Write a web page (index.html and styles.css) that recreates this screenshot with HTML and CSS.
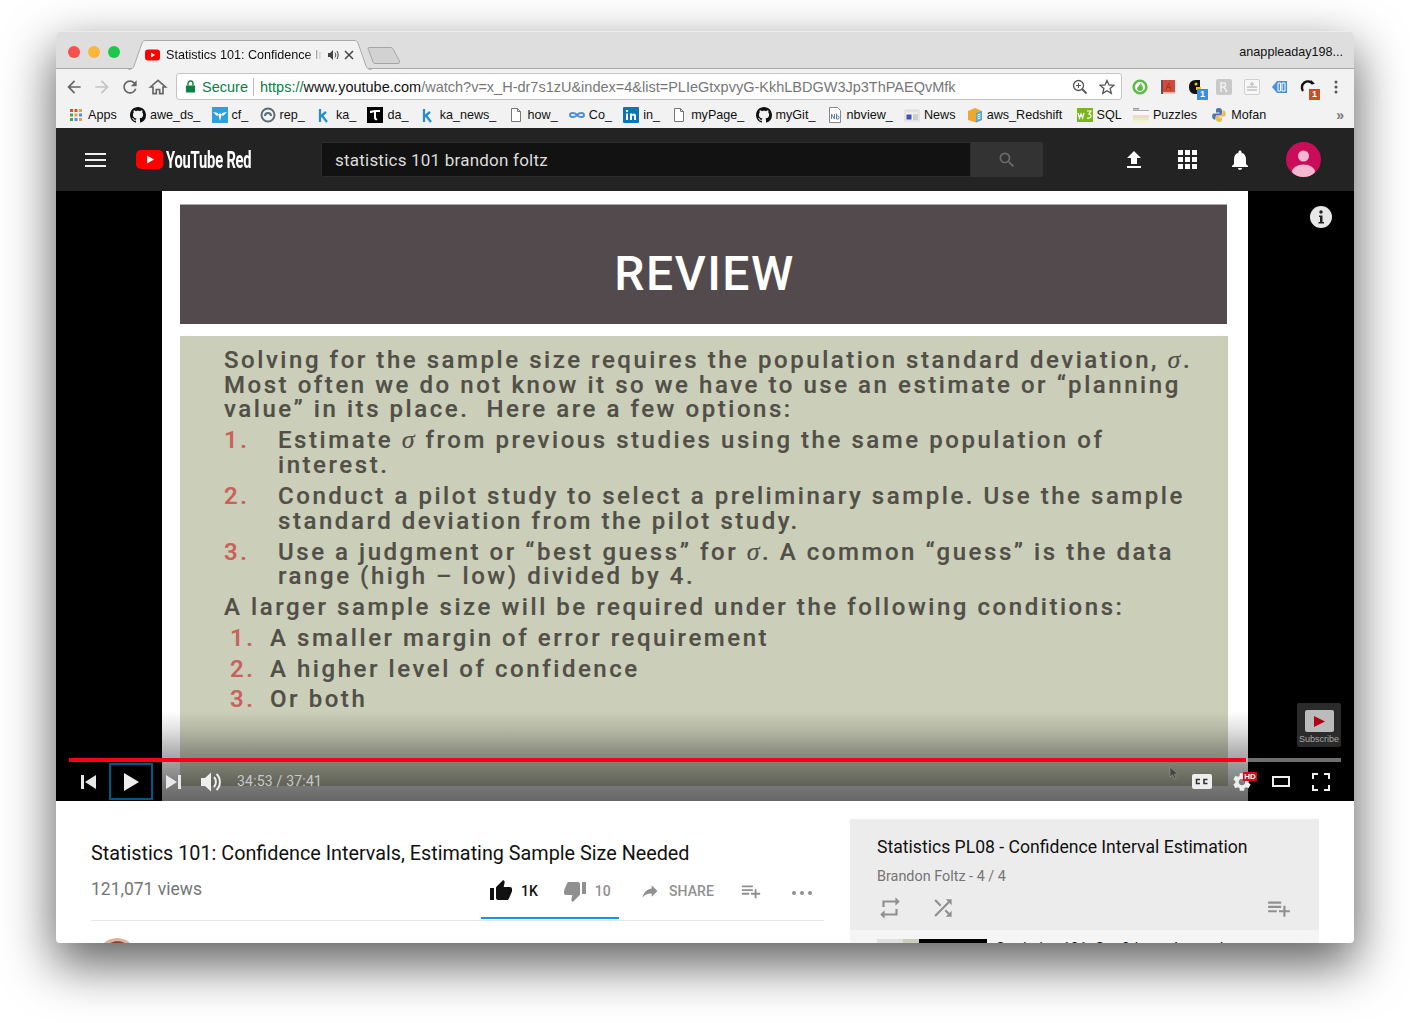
FILE: index.html
```html
<!DOCTYPE html>
<html lang="en">
<head>
<meta charset="utf-8">
<title>Statistics 101: Confidence Intervals</title>
<link rel="stylesheet" href="styles.css">
</head>
<body>
<svg class="defs" width="0" height="0">
  <symbol id="gh" viewBox="0 0 16 16"><path d="M8 0C3.58 0 0 3.58 0 8c0 3.54 2.29 6.53 5.47 7.59.4.07.55-.17.55-.38 0-.19-.01-.82-.01-1.49-2.01.37-2.53-.49-2.69-.94-.09-.23-.48-.94-.82-1.13-.28-.15-.68-.52-.01-.53.63-.01 1.08.58 1.23.82.72 1.21 1.87.87 2.33.66.07-.52.28-.87.51-1.07-1.78-.2-3.64-.89-3.64-3.95 0-.87.31-1.59.82-2.15-.08-.2-.36-1.02.08-2.12 0 0 .67-.21 2.2.82.64-.18 1.32-.27 2-.27.68 0 1.36.09 2 .27 1.53-1.04 2.2-.82 2.2-.82.44 1.1.16 1.92.08 2.12.51.56.82 1.27.82 2.15 0 3.07-1.87 3.75-3.65 3.95.29.25.54.73.54 1.48 0 1.07-.01 1.93-.01 2.2 0 .21.15.46.55.38A8.013 8.013 0 0016 8c0-4.42-3.58-8-8-8z" fill="#111"/></symbol>
  <symbol id="doc" viewBox="0 0 16 16"><path d="M3.5 1.5h6l3 3v10h-9z M9.5 1.5v3h3" fill="#fff" stroke="#777" stroke-width="1"/></symbol>
  <symbol id="k" viewBox="0 0 16 16"><path d="M4 2v13M4 10l6-5M6 8.500l5 6.500" fill="none" stroke="#2a8fc4" stroke-width="2.300"/></symbol>
  <symbol id="plus" viewBox="0 0 24 24"><path d="M14 10H2v2h12v-2zm0-4H2v2h12V6zm4 8v-4h-2v4h-4v2h4v4h2v-4h4v-2h-4zM2 16h8v-2H2v2z"/></symbol>
</svg>
<div class="window">

  <header class="titlebar">
    <div class="lights"><span class="light red"></span><span class="light amber"></span><span class="light green"></span></div>
    <div class="tab">
      <svg class="tab-shape" width="244" height="30" viewBox="0 0 244 30"><path d="M0.500 29.500C4 29.500 5 28 6 26L14 3C15 1 16 .500 18 .500H226C228 .500 229 1 230 3L238 26C239 28 240 29.500 243.500 29.500" fill="#f2f2f2" stroke="#a9a9a9"/></svg>
      <svg class="fav" width="16" height="12" viewBox="0 0 16 12"><rect width="15" height="11" y=".5" rx="3" fill="#f00"/><path d="M6 3.500v5l4-2.500z" fill="#fff"/></svg>
      <span class="tab-title">Statistics 101: Confidence Intervals</span>
      <svg class="tab-audio" width="11" height="10" viewBox="0 0 11 10"><path d="M0 3h2l3-3v10L2 7H0z" fill="#444"/><path d="M7 2.500c1 1.500 1 3.500 0 5M9 1c1.500 2.500 1.500 5.500 0 8" stroke="#444" fill="none"/></svg>
      <svg class="tab-close" width="10" height="10" viewBox="0 0 10 10"><path d="M1 1l8 8M9 1l-8 8" stroke="#444" stroke-width="1.500"/></svg>
    </div>
    <svg class="newtab" width="34" height="17" viewBox="0 0 34 17"><path d="M1 1.500C1 1 1.500 .500 2 .500H24C25 .500 25.500 1 26 2L32.500 14C33 15.500 32.500 16.500 31 16.500H8C7 16.500 6.500 16 6 15z" fill="#d2d2d2" stroke="#a5a5a5"/></svg>
    <span class="profile">anappleaday198...</span>
  </header>

  <nav class="toolbar">
    <svg class="nav-ic" width="20" height="20" viewBox="0 0 24 24"><path fill="#666" d="M20 11H7.830l5.590-5.590L12 4l-8 8 8 8 1.410-1.410L7.830 13H20v-2z"/></svg>
    <svg class="nav-ic" width="20" height="20" viewBox="0 0 24 24"><path fill="#c4c4c4" d="M4 11h12.170l-5.590-5.590L12 4l8 8-8 8-1.410-1.410L16.170 13H4v-2z"/></svg>
    <svg class="nav-ic" width="20" height="20" viewBox="0 0 24 24"><path fill="#666" d="M17.650 6.350A7.958 7.958 0 0012 4c-4.420 0-7.990 3.580-7.990 8s3.570 8 7.990 8c3.730 0 6.840-2.550 7.730-6h-2.080A5.990 5.990 0 0112 18c-3.310 0-6-2.690-6-6s2.690-6 6-6c1.660 0 3.140.69 4.220 1.780L13 11h7V4l-2.350 2.350z"/></svg>
    <svg class="nav-ic" width="20" height="20" viewBox="0 0 24 24"><path fill="none" stroke="#666" stroke-width="2" d="M3 12l9-8 9 8h-3v8h-4v-5h-4v5H6v-8z"/></svg>
    <div class="omnibox">
      <svg width="11" height="13" viewBox="0 0 11 13"><path d="M1 5.500h9V12.500H1z" fill="#0b8043"/><path d="M3 5.500V3.500a2.500 2.500 0 015 0v2" fill="none" stroke="#0b8043" stroke-width="1.400"/></svg>
      <span class="secure">Secure</span>
      <span class="omni-sep"></span>
      <span class="url"><span class="u-g">https://</span><span class="u-b">www.youtube.com</span><span class="u-l">/watch?v=x_H-dr7s1zU&amp;index=4&amp;list=PLIeGtxpvyG-KkhLBDGW3Jp3ThPAEQvMfk</span></span>
      <svg class="omni-zoom" width="16" height="16" viewBox="0 0 16 16"><circle cx="6.500" cy="6.500" r="5" fill="none" stroke="#555" stroke-width="1.300"/><path d="M10 10l4.500 4.500" stroke="#555" stroke-width="1.800"/><path d="M4 6.500h5M6.500 4v5" stroke="#555"/></svg>
      <svg width="16" height="16" viewBox="0 0 16 16"><path d="M8 1.500l2 4.500 4.800.4-3.700 3.100 1.200 4.800L8 11.700 3.700 14.300l1.200-4.800L1.200 6.400 6 6z" fill="none" stroke="#555" stroke-width="1.300"/></svg>
    </div>
    <div class="exts">
      <svg width="16" height="16" viewBox="0 0 16 16"><circle cx="8" cy="8" r="6.300" fill="#fff" stroke="#5dbb46" stroke-width="2.600"/><path d="M5 9a3 3 0 006 0c0-2-1.500-2.500-2-5-1 1-1 2-2 2.500z" fill="#5dbb46"/></svg>
      <svg width="16" height="16" viewBox="0 0 16 16"><path d="M2 1h13v12.500H2z" fill="#d44a3a"/><path d="M1 1h2v14H1z" fill="#555"/><path d="M3 13.500h12v1.500H3z" fill="#e9c9c0"/><path d="M6 11l2.500-7 2.500 7M7 8.500h3" fill="none" stroke="#a82f25"/></svg>
      <span class="ext-b"><svg width="16" height="16" viewBox="0 0 16 16"><path d="M8 1C3 1 1 4 1 8s2 7 6 7h5V1z" fill="#111"/><circle cx="8" cy="5" r="1.500" fill="#f1c40f"/><path d="M8 8h5v3H8z" fill="#f1c40f"/></svg><span class="badge blue">1</span></span>
      <svg width="16" height="16" viewBox="0 0 16 16"><rect width="16" height="16" rx="2" fill="#c9c9c9"/><path d="M5 3v10M5 4h3c2 0 2 4 0 4H5M8 8l3 5" stroke="#f1f1f1" stroke-width="1.500" fill="none"/></svg>
      <svg width="16" height="16" viewBox="0 0 16 16"><rect x=".5" y=".5" width="15" height="15" rx="1.500" fill="#f7f7f7" stroke="#d0d0d0"/><path d="M3 8h10M3 11h10M8 3v4M6 5h4" stroke="#c4c4c4" stroke-width="1.300"/></svg>
      <svg width="16" height="16" viewBox="0 0 16 16"><path d="M5 2h10v12H5L0 8z" fill="#4a90e2"/><path d="M6 4h2.500v8H6zM10 4h3v8h-3z" fill="none" stroke="#fff"/></svg>
      <span class="ext-b"><svg width="16" height="16" viewBox="0 0 16 16"><path d="M13 5A6 6 0 103 12" fill="none" stroke="#111" stroke-width="2.400"/><path d="M11 1v4h4z" fill="#111"/></svg><span class="badge rust">1</span></span>
      <svg class="dots" width="4" height="14" viewBox="0 0 4 14"><circle cx="2" cy="2" r="1.500" fill="#555"/><circle cx="2" cy="7" r="1.500" fill="#555"/><circle cx="2" cy="12" r="1.500" fill="#555"/></svg>
    </div>
  </nav>

  <div class="bookmarks">
    <span class="bm bm-first"><svg class="bm-apps" width="14" height="14" viewBox="0 0 14 14"><path d="M1 1h3v3H1z" fill="#e04a3a"/><path d="M5.500 1h3v3h-3z" fill="#e04a3a"/><path d="M10 1h3v3h-3z" fill="#e8a13a"/><path d="M1 5.500h3v3H1z" fill="#3aa757"/><path d="M5.500 5.500h3v3h-3z" fill="#e8a13a"/><path d="M10 5.500h3v3h-3z" fill="#4a8fe7"/><path d="M1 10h3v3H1z" fill="#3aa757"/><path d="M5.500 10h3v3h-3z" fill="#4a8fe7"/><path d="M10 10h3v3h-3z" fill="#e8a13a"/></svg>Apps</span>
    <span class="bm"><svg width="16" height="16"><use href="#gh"/></svg>awe_ds_</span>
    <span class="bm"><svg width="16" height="16" viewBox="0 0 16 16"><rect width="16" height="16" fill="#2f9fdf"/><path d="M1 5l5 1 2 8 2-8 5-1-4 4-3-3-3 3z" fill="#fff"/></svg>cf_</span>
    <span class="bm"><svg width="16" height="16" viewBox="0 0 16 16"><circle cx="8" cy="8" r="6.500" fill="none" stroke="#5b6b78" stroke-width="2"/><path d="M5 9a3 3 0 116 0" fill="none" stroke="#5b6b78" stroke-width="2"/></svg>rep_</span>
    <span class="bm"><svg width="16" height="16"><use href="#k"/></svg>ka_</span>
    <span class="bm"><svg width="16" height="16" viewBox="0 0 16 16"><rect width="16" height="16" fill="#000"/><path d="M3 5c2 0 3-1 5-1h5M8 4v7c0 1 1 1.500 2 1" fill="none" stroke="#fff" stroke-width="2"/></svg>da_</span>
    <span class="bm"><svg width="16" height="16"><use href="#k"/></svg>ka_news_</span>
    <span class="bm"><svg width="16" height="16"><use href="#doc"/></svg>how_</span>
    <span class="bm"><svg width="16" height="16" viewBox="0 0 16 16"><path d="M8 8C6.500 5.500 1 5 1 8s5.500 2.500 7 0c1.500-2.500 7-3 7 0s-5.500 2.500-7 0z" fill="none" stroke="#4a8fd4" stroke-width="2"/></svg>Co_</span>
    <span class="bm"><svg width="16" height="16" viewBox="0 0 16 16"><rect width="16" height="16" rx="1" fill="#0b76b4"/><path d="M3 6.500h2V13H3zM3 3h2v2H3zM7 6.500h2v1c1-1.500 4-1.500 4 1.500v4h-2V9.500c0-1.500-2-1.500-2 0V13H7z" fill="#fff"/></svg>in_</span>
    <span class="bm"><svg width="16" height="16"><use href="#doc"/></svg>myPage_</span>
    <span class="bm"><svg width="16" height="16"><use href="#gh"/></svg>myGit_</span>
    <span class="bm"><svg width="16" height="16" viewBox="0 0 16 16"><path d="M2.500 .500h8l3 3v12h-11z" fill="#fff" stroke="#888"/><path d="M4.500 12V7l3 5V7M9.500 6.500V12h1.500c1.500 0 1.500-3 0-3H9.500" fill="none" stroke="#5b7fb5"/></svg>nbview_</span>
    <span class="bm"><svg width="16" height="16" viewBox="0 0 16 16"><path d="M1 3h14v11H1z" fill="#f2f2f2" stroke="#bbb" stroke-width=".5"/><path d="M1 3h14v2.500H1z" fill="#e0e0e0"/><path d="M2.500 7.500h5v5h-5z" fill="#3f51b5"/><path d="M9 8h5M9 10h5M9 12h5" stroke="#aaa"/></svg>News</span>
    <span class="bm"><svg width="16" height="16" viewBox="0 0 16 16"><path d="M1 4l7-3 7 3v9l-6 2.500L1 13z" fill="#efa72d"/><path d="M9 6l6-2v9l-6 2.500z" fill="#5aa3d6"/><path d="M10.500 8l3-1M10.500 10l3-1M10.500 12l3-1" stroke="#fff"/></svg>aws_Redshift</span>
    <span class="bm bm-wide"><svg width="16" height="14" viewBox="0 0 16 14"><rect width="16" height="14" fill="#7ab51d"/><path d="M1 5l1.500 5 1.500-4 1.500 4L7 5M10 3h4l-2 3c3 0 3 5-2 4" fill="none" stroke="#fff" stroke-width="1.200"/></svg>SQL</span>
    <span class="bm"><svg width="16" height="16" viewBox="0 0 16 16"><path d="M0 1h6v1.500H0z" fill="#999"/><path d="M0 3h16v1H0z" fill="#aaa"/><path d="M0 4h16v4H0z" fill="#f8f8f8"/><path d="M0 8h16v3H0z" fill="#f6d5cf"/><path d="M0 11h16v2.500H0z" fill="#dff0c8"/><path d="M0 13.500h16V16H0z" fill="#f7f5c8"/></svg>Puzzles</span>
    <span class="bm bm-wide"><svg width="16" height="16" viewBox="0 0 16 16"><path d="M8 1C5 1 5 2.500 5 4v1.500h3.500V6.500H3C1 6.500 1 9 1.500 11c.5 1.500 1.500 1.500 3 1.500V10c0-1 1-2 2.500-2h3C11 8 11 6 11 5V3.500C11 2 9.500 1 8 1z" fill="#4b76a5"/><path d="M8 15c3 0 3-1.500 3-3v-1.500H7.500v-1H13c2 0 2-2.500 1.500-4.500-.5-1.500-1.500-1.500-3-1.500V6c0 1-1 2-2.500 2H6c-1 0-1 2-1 3v1.500C5 14 6.500 15 8 15z" fill="#e8c04a"/></svg>Mofan</span>
    <span class="bm-more">&raquo;</span>
  </div>

  <div class="masthead">
    <svg class="burger" width="21" height="14" viewBox="0 0 21 14"><path d="M0 1h21M0 7h21M0 13h21" stroke="#eee" stroke-width="2"/></svg>
    <div class="logo">
      <svg width="28" height="19" viewBox="0 0 28 19"><rect width="27.500" height="19" rx="5" fill="#f00"/><path d="M11 5.500v8l7-4z" fill="#fff"/></svg>
      <span class="logo-text">YouTube Red</span>
    </div>
    <div class="search">
      <span class="search-input">statistics 101 brandon foltz</span>
      <span class="search-btn"><svg width="20" height="20" viewBox="0 0 24 24"><path fill="#6b6b6b" d="M15.500 14h-.79l-.28-.27A6.471 6.471 0 0016 9.500 6.500 6.500 0 109.500 16c1.610 0 3.090-.59 4.230-1.570l.27.28v.79l5 4.990L20.490 19l-4.990-5zm-6 0C7.010 14 5 11.990 5 9.500S7.010 5 9.500 5 14 7.010 14 9.500 11.990 14 9.500 14z"/></svg></span>
    </div>
    <div class="mast-icons">
      <svg width="24" height="24" viewBox="0 0 24 24"><path fill="#fff" d="M9 16h6v-6h4l-7-7-7 7h4zm-4 2h14v2H5z"/></svg>
      <svg width="19" height="19" viewBox="0 0 19 19"><path fill="#fff" d="M0 0h5v5H0zM7 0h5v5H7zM14 0h5v5h-5zM0 7h5v5H0zM7 7h5v5H7zM14 7h5v5h-5zM0 14h5v5H0zM7 14h5v5H7zM14 14h5v5h-5z"/></svg>
      <svg width="24" height="24" viewBox="0 0 24 24"><path fill="#fff" d="M12 22c1.100 0 2-.9 2-2h-4c0 1.100.9 2 2 2zm6-6v-5c0-3.070-1.630-5.640-4.500-6.320V4c0-.83-.67-1.500-1.500-1.500s-1.500.67-1.500 1.500v.68C7.640 5.360 6 7.920 6 11v5l-2 2v1h16v-1l-2-2z"/></svg>
      <svg class="avatar" width="35" height="35" viewBox="0 0 35 35"><defs><clipPath id="av"><circle cx="17.500" cy="17.500" r="17.500"/></clipPath></defs><g clip-path="url(#av)"><rect width="35" height="35" fill="#c90d5b"/><circle cx="17.500" cy="14" r="5.500" fill="#f2b8d0"/><ellipse cx="17.500" cy="30" rx="11.500" ry="7.500" fill="#f2b8d0"/></g></svg>
    </div>
  </div>

  <section class="player">
    <div class="slide">
      <div class="slide-head">REVIEW</div>
      <div class="slide-body">
        <p class="sl-p">Solving for the sample size requires the population standard deviation, <i class="sig">σ</i>.<br>Most often we do not know it so we have to use an estimate or “planning<br>value” in its place.&nbsp; Here are a few options:</p>
        <div class="sl-item"><span class="sl-num">1.</span><span>Estimate <i class="sig">σ</i> from previous studies using the same population of<br>interest.</span></div>
        <div class="sl-item"><span class="sl-num">2.</span><span>Conduct a pilot study to select a preliminary sample. Use the sample<br>standard deviation from the pilot study.</span></div>
        <div class="sl-item"><span class="sl-num">3.</span><span>Use a judgment or “best guess” for <i class="sig">σ</i>. A common “guess” is the data<br>range (high – low) divided by 4.</span></div>
        <p class="sl-p sl-gap">A larger sample size will be required under the following conditions:</p>
        <div class="sl-item sl-sub"><span class="sl-num">1.</span><span>A smaller margin of error requirement</span></div>
        <div class="sl-item sl-sub"><span class="sl-num">2.</span><span>A higher level of confidence</span></div>
        <div class="sl-item sl-sub"><span class="sl-num">3.</span><span>Or both</span></div>
      </div>
    </div>
    <div class="shade"></div>
    <svg class="info" width="22" height="22" viewBox="0 0 22 22"><circle cx="11" cy="11" r="11" fill="#e8e8e8"/><circle cx="11" cy="6" r="1.700" fill="#222"/><path d="M9 9.500h3.500V16H14v1.500H8.500V16H10v-5H9z" fill="#222"/></svg>
    <div class="subscribe">
      <span class="sub-thumb"><svg width="12" height="11" viewBox="0 0 12 11"><path d="M1 0l11 5.500L1 11z" fill="#b00014"/></svg></span>
      <span class="sub-label">Subscribe</span>
    </div>
    <div class="controls">
      <div class="progress"><div class="progress-fill"></div></div>
      <div class="ctrl-row">
        <svg class="c-prev" width="16" height="14" viewBox="0 0 16 14"><path d="M0 0h3v14H0zM15 0v14L4 7z" fill="#e8e8e8"/></svg>
        <span class="c-play"><svg width="16" height="18" viewBox="0 0 16 18"><path d="M0 0l15 9L0 18z" fill="#eee"/></svg></span>
        <svg class="c-next" width="15" height="14" viewBox="0 0 15 14"><path d="M0 0l11 7-11 7zM12 0h3v14h-3z" fill="#e8e8e8"/></svg>
        <svg class="c-vol" width="22" height="20" viewBox="0 0 22 20"><path d="M0 6h4l6-5.500v19L4 14H0z" fill="#eee"/><path d="M13 5c2.500 2.500 2.500 7.500 0 10M15.500 2c4.500 4 4.500 12 0 16" stroke="#eee" stroke-width="2" fill="none"/></svg>
        <span class="c-time">34:53 / 37:41</span>
        <div class="c-right">
          <svg class="c-cursor" width="10" height="14" viewBox="0 0 10 14"><path d="M1 1v10l2.500-2.200L5.500 13l1.700-.8L5.300 8.200H9z" fill="#444" stroke="#999" stroke-width=".6"/></svg>
          <svg class="c-cc" width="20" height="15" viewBox="0 0 20 15"><rect width="20" height="15" rx="2" fill="#eee"/><path d="M8 5.500H4.500v4H8M15.500 5.500H12v4h3.500" fill="none" stroke="#333" stroke-width="1.600"/></svg>
          <span class="c-gear"><svg width="22" height="22" viewBox="0 0 24 24"><path fill="#eee" d="M19.140 12.940c.04-.3.060-.61.060-.94 0-.32-.02-.64-.07-.94l2.030-1.580a.49.49 0 00.12-.61l-1.920-3.320a.488.488 0 00-.59-.22l-2.390.96c-.5-.38-1.030-.7-1.620-.94l-.36-2.540a.484.484 0 00-.48-.41h-3.840c-.24 0-.43.17-.47.41l-.36 2.540c-.59.24-1.130.57-1.620.94l-2.390-.96c-.22-.08-.47 0-.59.22L2.740 8.870c-.12.21-.08.47.12.61l2.030 1.580c-.05.3-.09.63-.09.94s.02.64.07.94l-2.030 1.580a.49.49 0 00-.12.61l1.920 3.320c.12.22.37.29.59.22l2.390-.96c.5.38 1.030.7 1.620.94l.36 2.540c.05.24.24.41.48.41h3.840c.24 0 .44-.17.47-.41l.36-2.540c.59-.24 1.130-.56 1.620-.94l2.390.96c.22.08.47 0 .59-.22l1.920-3.320c.12-.22.07-.47-.12-.61l-2.010-1.580zM12 15.600c-1.980 0-3.600-1.620-3.600-3.600s1.620-3.600 3.600-3.600 3.600 1.620 3.600 3.600-1.620 3.600-3.600 3.600z"/></svg><span class="hd">HD</span></span>
          <svg class="c-theater" width="18" height="11" viewBox="0 0 18 11"><rect x="1" y="1" width="16" height="9" fill="none" stroke="#eee" stroke-width="2"/></svg>
          <svg class="c-full" width="18" height="18" viewBox="0 0 18 18"><path d="M1 6V1h5M12 1h5v5M17 12v5h-5M6 17H1v-5" fill="none" stroke="#eee" stroke-width="2"/></svg>
        </div>
      </div>
    </div>
  </section>

  <section class="below">
    <div class="info-col">
      <h1 class="v-title">Statistics 101: Confidence Intervals, Estimating Sample Size Needed</h1>
      <div class="v-meta">
        <span class="views">121,071 views</span>
        <div class="actions">
          <div class="a-rate">
            <span class="a-btn a-dark"><svg width="24" height="24" viewBox="0 0 24 24"><path fill="#111" d="M1 21h4V9H1v12zm22-11c0-1.100-.9-2-2-2h-6.310l.95-4.570.03-.32c0-.41-.17-.79-.44-1.060L14.170 1 7.590 7.590C7.220 7.950 7 8.450 7 9v10c0 1.100.9 2 2 2h9c.83 0 1.540-.5 1.840-1.220l3.020-7.050c.09-.23.14-.47.14-.73v-2z"/></svg>1K</span>
            <span class="a-btn"><svg width="24" height="24" viewBox="0 0 24 24"><path fill="#909090" d="M15 3H6c-.83 0-1.540.5-1.840 1.220l-3.020 7.050c-.09.23-.14.47-.14.73v2c0 1.100.9 2 2 2h6.310l-.95 4.570-.03.32c0 .41.17.79.44 1.060L9.830 23l6.590-6.590c.36-.36.58-.86.58-1.410V5c0-1.100-.9-2-2-2zm4 0v12h4V3h-4z"/></svg>10</span>
          </div>
          <span class="a-btn a-share"><svg width="20" height="20" viewBox="0 0 24 24"><path fill="#909090" d="M14 9V5l7 7-7 7v-4.100c-5 0-8.500 1.600-11 5.100 1-5 4-10 11-11z"/></svg>SHARE</span>
          <svg class="a-plus" width="22" height="22" viewBox="0 0 24 24" fill="#909090"><use href="#plus"/></svg>
          <svg class="a-more" width="20" height="4" viewBox="0 0 20 4"><circle cx="2" cy="2" r="2" fill="#909090"/><circle cx="10" cy="2" r="2" fill="#909090"/><circle cx="18" cy="2" r="2" fill="#909090"/></svg>
        </div>
      </div>
      <div class="owner"><svg width="40" height="40" viewBox="0 0 40 40"><circle cx="20" cy="20" r="20" fill="#d9b49c"/><path d="M11 7c4-5 15-5 19 0l-1 3H12z" fill="#8a3d33"/></svg></div>
    </div>
    <aside class="playlist">
      <div class="pl-head">
        <div class="pl-title">Statistics PL08 - Confidence Interval Estimation</div>
        <div class="pl-sub">Brandon Foltz - 4 / 4</div>
        <div class="pl-icons">
          <svg width="26" height="26" viewBox="0 0 24 24"><path fill="#909090" d="M7 7h10v3l4-4-4-4v3H5v6h2V7zm10 10H7v-3l-4 4 4 4v-3h12v-6h-2v4z"/></svg>
          <svg width="26" height="26" viewBox="0 0 24 24"><path fill="#909090" d="M10.590 9.170L5.410 4 4 5.410l5.170 5.170 1.420-1.410zM14.500 4l2.040 2.040L4 18.590 5.410 20 17.960 7.460 20 9.500V4h-5.500zm.33 9.410l-1.410 1.410 3.130 3.130L14.500 20H20v-5.500l-2.040 2.040-3.130-3.130z"/></svg>
          <svg class="pl-add" width="26" height="26" viewBox="0 0 24 24" fill="#909090"><use href="#plus"/></svg>
        </div>
      </div>
      <div class="pl-row">
        <span class="pl-thumb"><span class="pl-t1"></span><span class="pl-t2"></span><span class="pl-t3"></span></span>
        <span class="pl-text">Statistics 101: Confidence Intervals</span>
      </div>
    </aside>
  </section>
</div>
</body>
</html>
```

FILE: styles.css
```css
* { box-sizing: border-box; }
html, body { margin: 0; padding: 0; }
body {
  width: 1410px;
  height: 1023px;
  background: #fff;
  padding: 31px 56px 0;
  overflow: hidden;
  font-family: "Liberation Sans", Arial, sans-serif;
}
.defs { position: absolute; }
svg { display: block; flex: none; }
.window {
  width: 1298px;
  height: 912px;
  border-radius: 6px 6px 4px 4px;
  overflow: hidden;
  background: #fff;
  box-shadow: 0 20px 50px 2px rgba(0,0,0,.62);
}

/* browser chrome */
.titlebar {
  height: 38px;
  background: #dedede;
  border-top: 1px solid #ececec;
  border-bottom: 1px solid #a9a9a9;
  display: flex;
  align-items: flex-start;
  position: relative;
}
.lights { display: flex; gap: 8px; padding: 14px 0 0 12px; width: 72px; }
.light { width: 12px; height: 12px; border-radius: 50%; }
.red { background: #f8504c; }
.amber { background: #fdb63a; }
.green { background: #1cc84a; }
.tab {
  position: relative;
  width: 244px;
  height: 30px;
  margin-top: 8px;
  display: flex;
  align-items: center;
  padding: 0 0 0 17px;
  font-size: 12.6px;
  color: #111;
}
.tab-shape { position: absolute; left: 0; top: 0; }
.fav, .tab-title, .tab-audio, .tab-close { position: relative; }
.tab-title {
  margin-left: 5px;
  width: 157px;
  flex: none;
  white-space: nowrap;
  overflow: hidden;
  -webkit-mask-image: linear-gradient(90deg, #000 140px, transparent 157px);
  mask-image: linear-gradient(90deg, #000 140px, transparent 157px);
}
.tab-audio { margin-left: 5px; }
.tab-close { margin-left: 5px; }
.newtab { margin: 15px 0 0 -5px; }
.profile {
  margin-left: auto;
  padding: 13px 11px 0 0;
  font-size: 12.6px;
  color: #111;
}
.toolbar {
  height: 31px;
  background: #f2f2f2;
  display: flex;
  align-items: center;
  padding: 4px 0 0 8px;
  gap: 8px;
}
.omnibox {
  width: 946px;
  height: 27px;
  background: #fff;
  border: 1px solid #c4c4c4;
  border-radius: 3px;
  display: flex;
  align-items: center;
  padding: 0 6px 0 8px;
  font-size: 14.5px;
}
.secure { margin-left: 6px; color: #0b8043; }
.omni-sep { width: 1px; height: 18px; background: #b8b8b8; margin: 0 6px 0 5px; }
.url { white-space: nowrap; flex: 1; }
.u-g { color: #0b8043; }
.u-b { color: #111; }
.u-l { color: #777; }
.omni-zoom { margin-right: 11px; }
.exts { display: flex; align-items: center; gap: 12px; padding-left: 2px; flex: 1; }
.ext-b { position: relative; display: block; }
.badge {
  position: absolute;
  right: -4px;
  bottom: -5px;
  width: 11px;
  height: 11px;
  font-size: 9px;
  line-height: 11px;
  font-weight: 700;
  text-align: center;
  color: #fff;
}
.blue { background: #3b8ee8; }
.rust { background: #c4502d; }
.dots { margin-left: 6px; }
.bookmarks {
  height: 29px;
  background: #f2f2f2;
  border-bottom: 1px solid #222;
  display: flex;
  align-items: center;
  padding: 1px 0 0 13px;
  gap: 11.2px;
  font-size: 12.6px;
  color: #111;
  white-space: nowrap;
}
.bm { display: flex; align-items: center; gap: 4px; }
.bm-first { margin-right: 2px; }
.bm-wide { margin-left: 3px; }
.bm-apps { margin-right: 1px; }
.bm-more { margin-left: auto; margin-right: 10px; font-size: 14px; font-weight: 700; color: #777; }

/* masthead */
.masthead {
  height: 62px;
  background: #232323;
  display: flex;
  align-items: center;
  padding: 0 0 1px 29px;
}
.logo { display: flex; align-items: center; margin-left: 30px; width: 185px; }
.logo-text {
  margin-left: 2px;
  font: 700 23px/1 "Roboto", sans-serif;
  color: #fff;
  white-space: nowrap;
  transform: scaleX(.64);
  transform-origin: 0 50%;
  letter-spacing: -.3px;
  padding-top: 1px;
}
.search { display: flex; height: 35px; }
.search-input {
  width: 650px;
  background: #121212;
  border: 1px solid #2c2c2c;
  border-radius: 2px 0 0 2px;
  color: #dcdcdc;
  font: 400 17px/33px "Roboto", sans-serif;
  letter-spacing: .22px;
  padding: 1px 0 0 13px;
}
.search-btn {
  width: 72px;
  background: #333;
  border-radius: 0 2px 2px 0;
  display: flex;
  align-items: center;
  justify-content: center;
}
.mast-icons { display: flex; align-items: center; margin-left: 79px; }
.mast-icons svg:nth-child(2) { margin-left: 32px; }
.mast-icons svg:nth-child(3) { margin-left: 31px; }
.avatar { margin-left: 34px; }

/* player */
.player {
  position: relative;
  height: 610px;
  background: #000;
  display: flex;
  justify-content: center;
}
.slide {
  width: 1086px;
  background: #fff;
  padding: 13px 0 0 18px;
}
.slide-head {
  width: 1047px;
  height: 120px;
  background: #534a4d;
  border-top: 1px solid #aaa;
  color: #fff;
  font: 500 48px/137px "Roboto", sans-serif;
  letter-spacing: 1.5px;
  text-align: center;
  padding-left: 2px;
}
.slide-body {
  width: 1048px;
  height: 450px;
  margin-top: 12px;
  background: #cbcfb9;
  padding: 12.4px 0 0 44px;
  color: #514f48;
  font: 500 24px/24.5px "Roboto", sans-serif;
  letter-spacing: 2.55px;
  -webkit-text-stroke: .2px;
  white-space: nowrap;
}
.sl-p { margin: 0; }
.sl-gap { margin-top: 6.6px; }
.sl-item { display: flex; margin-top: 6.6px; }
.sl-num { width: 54px; flex: none; color: #c8615a; }
.sl-sub { margin-left: 6px; }
.sl-sub + .sl-sub { margin-top: 6px; }
.sl-sub .sl-num { width: 40px; }
.sig { font-family: "Liberation Serif", serif; font-weight: 400; font-size: 26px; line-height: 0; }
.shade {
  position: absolute;
  left: 0; right: 0; bottom: 0;
  height: 90px;
  background: linear-gradient(rgba(0,0,0,0), rgba(0,0,0,.12) 22%, rgba(0,0,0,.3) 45%, rgba(0,0,0,.53) 83%, rgba(0,0,0,.6));
}
.info { position: absolute; right: 22px; top: 15px; }
.subscribe {
  position: absolute;
  right: 13px;
  top: 512px;
  width: 44px;
  height: 44px;
  background: #2b2b2b;
  border-radius: 2px;
  display: flex;
  flex-direction: column;
  align-items: center;
  padding-top: 7px;
}
.sub-thumb {
  width: 29px;
  height: 22px;
  background: #bbb;
  border-radius: 2px;
  display: flex;
  align-items: center;
  justify-content: center;
}
.sub-label { font-size: 9px; line-height: 15px; color: #aaa; }
.controls { position: absolute; left: 0; right: 0; bottom: 0; height: 43px; }
.progress { height: 4px; margin: 0 13px; background: rgba(200,200,200,.55); }
.progress-fill { width: 92.55%; height: 100%; background: #f8001a; }
.ctrl-row { display: flex; align-items: center; height: 37px; margin-top: 1px; padding-left: 25px; }
.c-play {
  width: 44px;
  height: 37px;
  margin-left: 12px;
  border: 2px solid #00578a;
  display: flex;
  align-items: center;
  justify-content: center;
  padding-left: 2px;
}
.c-next { margin-left: 13px; }
.c-vol { margin-left: 20px; }
.c-time { margin: 0 0 2px 14px; font: 400 14px "Roboto", sans-serif; color: #c8c8c8; letter-spacing: .2px; }
.c-right { margin-left: auto; display: flex; align-items: center; padding-right: 24px; }
.c-cursor { margin: 0 13px 18px 0; }
.c-gear { position: relative; margin-left: 19px; display: block; }
.hd {
  position: absolute;
  right: -4px;
  top: 1px;
  width: 14px;
  text-align: center;
  background: #e0001b;
  color: #fff;
  font-size: 8px;
  line-height: 9px;
  font-weight: 700;
  border-radius: 1px;
}
.c-theater { margin-left: 19px; }
.c-full { margin-left: 22px; }

/* below */
.below { display: flex; height: 142px; overflow: hidden; padding-left: 35px; }
.info-col { width: 733px; padding-top: 40px; }
.v-title {
  margin: 0;
  font: 400 19.8px/26px "Roboto", sans-serif;
  color: #111;
  white-space: nowrap;
}
.v-meta {
  display: flex;
  align-items: flex-start;
  justify-content: space-between;
  height: 44px;
  margin-top: 10px;
  border-bottom: 1px solid #e8e8e8;
}
.views { font: 400 17.5px/24px "Roboto", sans-serif; color: #757575; }
.actions { display: flex; align-items: flex-start; height: 42px; }
.a-rate {
  display: flex;
  align-items: center;
  gap: 25px;
  height: 42px;
  padding: 0 0 12px 8px;
  width: 138px;
  border-bottom: 2px solid #0f9ae8;
}
.a-btn {
  display: flex;
  align-items: center;
  gap: 8px;
  font: 500 14px "Roboto", sans-serif;
  color: #909090;
}
.a-dark { color: #111; }
.a-share { margin: 4px 0 0 21px; gap: 9px; letter-spacing: .1px; }
.a-plus { margin: 3px 0 0 26px; }
.a-more { margin: 14px 12px 0 30px; }
.owner { margin: 17px 0 0 6px; }
.playlist { margin-left: 26px; width: 469px; margin-top: 18px; }
.pl-head { height: 111px; background: #ececec; padding: 16px 27px 0; }
.pl-title { font: 400 17.6px/24px "Roboto", sans-serif; color: #111; white-space: nowrap; }
.pl-sub { font: 400 14.4px/20px "Roboto", sans-serif; color: #757575; margin-top: 8px; }
.pl-icons { display: flex; align-items: center; margin-top: 8px; gap: 27px; }
.pl-add { margin-left: auto; }
.pl-row { background: #f5f5f5; height: 40px; padding: 9px 0 0 27px; display: flex; }
.pl-thumb { display: flex; width: 110px; height: 30px; }
.pl-t1 { width: 26px; background: #e0e0e0; }
.pl-t2 { width: 16px; background: #cbcfb9; }
.pl-t3 { flex: 1; background: #000; }
.pl-text { margin-left: 9px; font: 400 15px/18px "Roboto", sans-serif; color: #111; white-space: nowrap; }
```
